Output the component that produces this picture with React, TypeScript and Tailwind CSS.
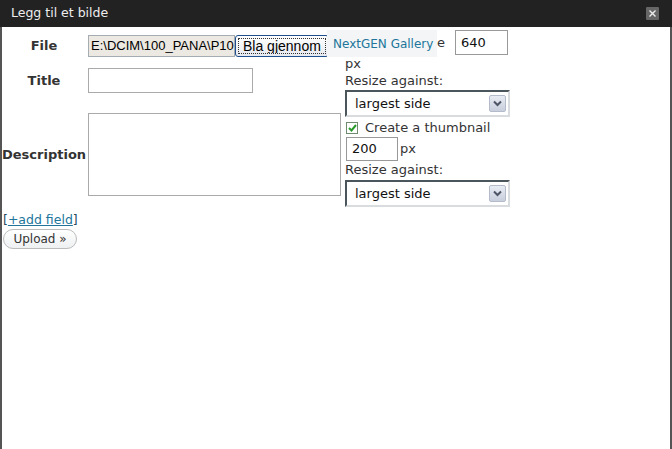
import React from "react";

function Chevron() {
  return (
    <span className="flex h-[17px] w-[17px] items-center justify-center rounded-[2px] border border-[#b4bccb] bg-gradient-to-b from-[#e8ecf4] to-[#c8cedc]">
      <svg width="9" height="7" viewBox="0 0 9 7">
        <path d="M1 1.5 L4.5 5 L8 1.5" fill="none" stroke="#4d5566" strokeWidth="2" />
      </svg>
    </span>
  );
}

function Select() {
  return (
    <div className="flex h-[27px] w-[165px] items-center justify-between border-2 border-t-[#4a565c] border-l-[#4a565c] border-r-[#d8dcdf] border-b-[#d8dcdf] bg-white pl-[8px] pr-[2px] text-[13px] text-[#111]">
      <span>largest side</span>
      <Chevron />
    </div>
  );
}

export default function App() {
  return (
    <div className="flex h-[449px] w-[672px] flex-col bg-white font-['DejaVu_Sans',sans-serif] text-[#333]">
      {/* TITLE BAR */}
      <div className="flex h-[27px] shrink-0 items-center justify-between bg-[#222] pl-[11px] pr-[13px]">
        <span className="text-[12.5px] text-[#eee]">Legg til et bilde</span>
        <span className="flex h-[13px] w-[13px] items-center justify-center rounded-[1px] bg-[#666]">
          <svg width="7" height="7" viewBox="0 0 7 7">
            <path d="M0.5 0.5 L6.5 6.5 M6.5 0.5 L0.5 6.5" stroke="#eee" strokeWidth="1.4" />
          </svg>
        </span>
      </div>

      {/* BODY */}
      <div className="relative flex flex-1 border-x-2 border-[#555]">
        {/* LEFT: form table */}
        <div className="w-[343px] shrink-0">
          <div className="mt-[8px] flex h-[22px] items-center">
            <span className="w-[84px] text-center text-[13px] font-bold">File</span>
            <div className="ml-[2px] flex h-[22px] w-[147px] items-center overflow-hidden whitespace-nowrap border border-[#a5acb2] bg-[#ece9e2] pl-[2px] font-['Liberation_Sans',sans-serif] text-[13px] text-black">
              E:\DCIM\100_PANA\P10
            </div>
            <div className="flex h-[22px] w-[94px] items-center rounded-[3px] border border-[#1e4f8c] bg-gradient-to-b from-white to-[#e6e9ee] p-[2px]">
              <span className="flex h-full w-full items-center overflow-hidden whitespace-nowrap border border-dotted border-[#333] pl-[4px] font-['Liberation_Sans',sans-serif] text-[14px] text-black">
                Bla gjennom
              </span>
            </div>
          </div>

          <div className="mt-[11px] flex h-[25px] items-center">
            <span className="w-[84px] pt-[1px] text-center text-[13px] font-bold">Title</span>
            <div className="ml-[2px] h-[25px] w-[165px] border border-[#aaa] bg-white" />
          </div>

          <div className="mt-[20px] flex h-[83px] items-center">
            <span className="w-[84px] pt-[1px] text-center text-[13px] font-bold">Description</span>
            <div className="ml-[2px] h-[83px] w-[253px] border border-[#aaa] bg-white" />
          </div>

          <div className="mt-[16px] pl-[1px] text-[12.5px] leading-[16px] text-[#264a5c]">
            [<span className="text-[#21759b] underline">+add field</span>]
          </div>

          <button className="ml-[1px] mt-[1px] flex h-[20px] w-[74px] items-center justify-center rounded-full border border-[#bbb] bg-gradient-to-b from-white to-[#eef0f1] text-[12px] text-[#333]">
            Upload »
          </button>
        </div>

        {/* RIGHT: resize options */}
        <div className="w-[165px] text-[13px] text-[#333]">
          <div className="mt-[3px] flex h-[25px] items-center justify-end pr-[2px]">
            <span className="whitespace-nowrap">e</span>
            <div className="ml-[10px] flex h-[25px] w-[53px] shrink-0 items-center border border-[#999] bg-white pl-[5px] text-[#111]">
              640
            </div>
          </div>
          <div className="leading-[17px]">px</div>
          <div className="leading-[17px]">Resize against:</div>
          <div className="mt-[1px]">
            <Select />
          </div>
          <div className="mt-[3px] flex h-[15px] items-center">
            <span className="ml-[1px] flex h-[12px] w-[12px] items-center justify-center border border-[#6f8a6f] bg-white">
              <svg width="9" height="8" viewBox="0 0 9 8">
                <path d="M1 4 L3.5 6.5 L8 1" fill="none" stroke="#2a9a2a" strokeWidth="2" />
              </svg>
            </span>
            <span className="ml-[7px]">Create a thumbnail</span>
          </div>
          <div className="mt-[2px] flex h-[24px] items-center">
            <div className="ml-[1px] flex h-[24px] w-[52px] items-center border border-[#999] bg-white pl-[5px] text-[#111]">
              200
            </div>
            <span className="ml-[2px]">px</span>
          </div>
          <div className="leading-[17px]">Resize against:</div>
          <div className="mt-[2px]">
            <Select />
          </div>
        </div>

        {/* TOOLTIP OVERLAY */}
        <div className="absolute left-[325px] top-[3px] flex h-[27px] w-[110px] items-center bg-[#f3f5f6] pl-[6px] text-[12px] text-[#21759b]">
          NextGEN Gallery
        </div>
      </div>
    </div>
  );
}
